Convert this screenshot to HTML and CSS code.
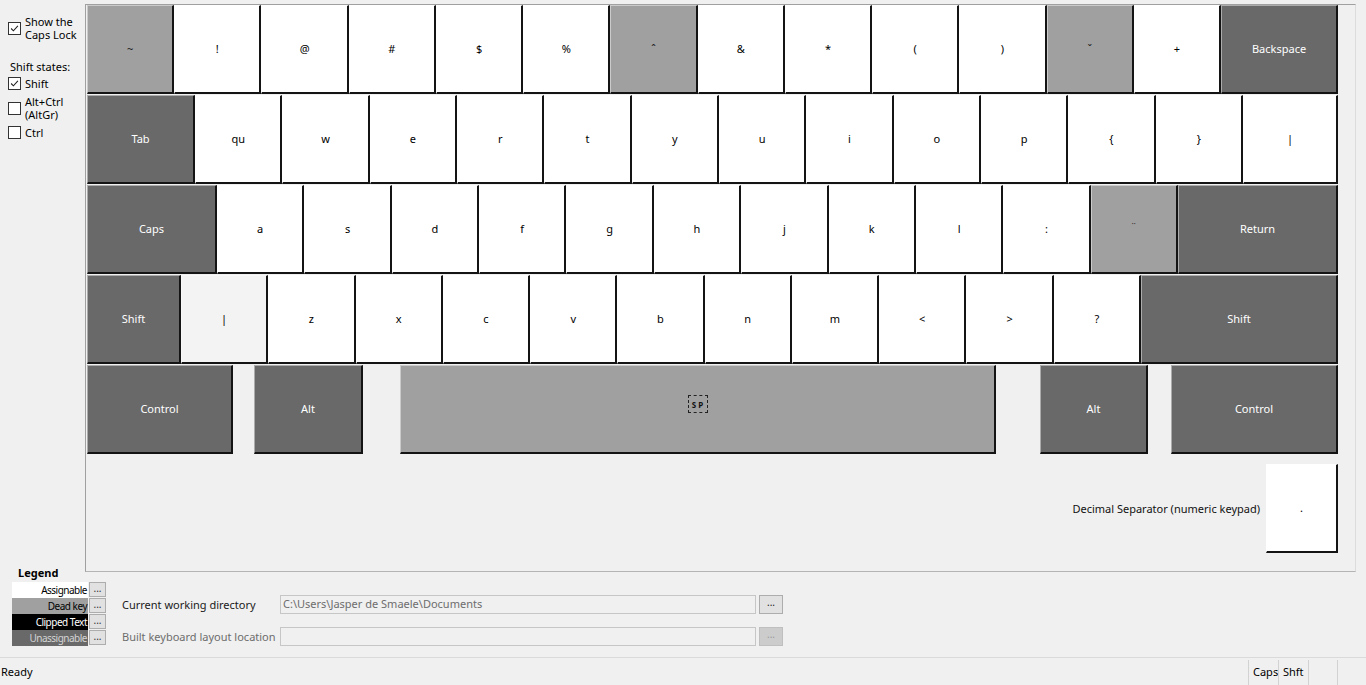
FILE: index.html
```html
<!DOCTYPE html>
<html>
<head>
<meta charset="utf-8">
<title>Keyboard Layout</title>
<link rel="stylesheet" href="styles.css">
</head>
<body>
<div class="app">
  <div class="main">
    <aside class="side">
      <label class="chk two"><span class="box"><svg viewBox="0 0 13 13"><polyline points="2.5,6.5 5.2,9.2 10.5,3.5"/></svg></span><span>Show the<br>Caps Lock</span></label>
      <div class="group-title">Shift states:</div>
      <label class="chk"><span class="box"><svg viewBox="0 0 13 13"><polyline points="2.5,6.5 5.2,9.2 10.5,3.5"/></svg></span><span>Shift</span></label>
      <label class="chk two"><span class="box"></span><span>Alt+Ctrl<br>(AltGr)</span></label>
      <label class="chk"><span class="box"></span><span>Ctrl</span></label>
      <div class="legend-title">Legend</div>
    </aside>
    <section class="panel">
      <div class="kb">
        <div class="row">
          <div class="key dead">~</div>
          <div class="key">!</div>
          <div class="key">@</div>
          <div class="key">#</div>
          <div class="key">$</div>
          <div class="key">%</div>
          <div class="key dead">ˆ</div>
          <div class="key">&amp;</div>
          <div class="key">*</div>
          <div class="key">(</div>
          <div class="key">)</div>
          <div class="key dead">ˇ</div>
          <div class="key">+</div>
          <div class="key fixed dark w-bs">Backspace</div>
        </div>
        <div class="row">
          <div class="key fixed dark w-tab">Tab</div>
          <div class="key">qu</div>
          <div class="key">w</div>
          <div class="key">e</div>
          <div class="key">r</div>
          <div class="key">t</div>
          <div class="key">y</div>
          <div class="key">u</div>
          <div class="key">i</div>
          <div class="key">o</div>
          <div class="key">p</div>
          <div class="key">{</div>
          <div class="key">}</div>
          <div class="key fixed w-pipe">|</div>
        </div>
        <div class="row">
          <div class="key fixed dark w-caps">Caps</div>
          <div class="key">a</div>
          <div class="key">s</div>
          <div class="key">d</div>
          <div class="key">f</div>
          <div class="key">g</div>
          <div class="key">h</div>
          <div class="key">j</div>
          <div class="key">k</div>
          <div class="key">l</div>
          <div class="key">:</div>
          <div class="key dead small">¨</div>
          <div class="key fixed dark w-ret">Return</div>
        </div>
        <div class="row">
          <div class="key fixed dark w-lshift">Shift</div>
          <div class="key hover">|</div>
          <div class="key">z</div>
          <div class="key">x</div>
          <div class="key">c</div>
          <div class="key">v</div>
          <div class="key">b</div>
          <div class="key">n</div>
          <div class="key">m</div>
          <div class="key">&lt;</div>
          <div class="key">&gt;</div>
          <div class="key">?</div>
          <div class="key fixed dark w-rshift">Shift</div>
        </div>
        <div class="row bottom-row">
          <div class="key fixed dark w-lctrl">Control</div>
          <div class="key fixed dark w-lalt">Alt</div>
          <div class="key fixed dead w-space"><span class="sp">SP</span></div>
          <div class="key fixed dark w-ralt">Alt</div>
          <div class="key fixed dark w-rctrl">Control</div>
        </div>
        <div class="decimal">
          <span class="dec-label">Decimal Separator (numeric keypad)</span>
          <div class="key fixed w-dec">.</div>
        </div>
      </div>
    </section>
  </div>
  <div class="lower">
    <div class="legend">
      <div class="lg-row"><span class="sw sw-assign">Assignable</span><span class="dots">...</span></div>
      <div class="lg-row"><span class="sw sw-dead">Dead key</span><span class="dots">...</span></div>
      <div class="lg-row"><span class="sw sw-clip">Clipped Text</span><span class="dots">...</span></div>
      <div class="lg-row"><span class="sw sw-un">Unassignable</span><span class="dots">...</span></div>
    </div>
    <div class="fields">
      <div class="field">
        <span class="flabel">Current working directory</span>
        <div class="input">C:\Users\Jasper de Smaele\Documents</div>
        <span class="btn">...</span>
      </div>
      <div class="field disabled">
        <span class="flabel">Built keyboard layout location</span>
        <div class="input"></div>
        <span class="btn">...</span>
      </div>
    </div>
  </div>
  <footer class="status">
    <span class="ready">Ready</span>
    <span class="cell c-caps">Caps</span>
    <span class="cell c-shft">Shft</span>
    <span class="cell c-e1"></span>
    <span class="cell c-e2"></span>
  </footer>
</div>
</body>
</html>
```
FILE: styles.css
```css
* { box-sizing: border-box; }
html, body { margin: 0; padding: 0; }
body {
  background: #f0f0f0;
  font-family: "Segoe UI", "Noto Sans", "DejaVu Sans", sans-serif;
  font-size: 11px;
  color: #000;
  width: 1366px;
  height: 685px;
  overflow: hidden;
}
.app { display: flex; flex-direction: column; height: 685px; }
.main { display: flex; height: 580px; }

/* sidebar */
.side {
  width: 85px;
  flex: none;
  display: flex;
  flex-direction: column;
  padding: 15px 0 0 8px;
  white-space: nowrap;
}
.chk { display: flex; align-items: center; gap: 4px; line-height: 13px; height: 13px; }
.chk.two { height: 26px; }
.chk + .chk { margin-top: 5px; }
.chk.two + .chk { margin-top: 5px; }
.box {
  width: 13px; height: 13px; flex: none;
  border: 1px solid #333;
  background: #fff;
  display: flex;
}
.box svg { width: 11px; height: 11px; }
.box polyline { fill: none; stroke: #222; stroke-width: 1.3; }
.group-title { margin: 19px 0 3px 2px; line-height: 14px; }
.legend-title {
  margin-top: auto;
  margin-left: 10px;
  font-weight: bold;
  line-height: 14px;
}

/* keyboard panel */
.panel {
  margin-top: 4px;
  width: 1271px;
  height: 568px;
  border-top: 1px solid #a0a0a0;
  border-left: 1px solid #a0a0a0;
  border-bottom: 1px solid #b4b4b4;
  border-right: 1px solid #dcdcdc;
  padding-left: 1px;
}
.kb { width: 1251px; display: flex; flex-direction: column; gap: 1px; }
.row { display: flex; height: 89px; }
.key {
  flex: 1 1 0;
  min-width: 0;
  height: 89px;
  background: #fff;
  border-left: 1px solid rgba(255,255,255,0.45);
  border-top: 1px solid rgba(255,255,255,0.45);
  border-right: 2px solid #141414;
  border-bottom: 2px solid #141414;
  display: flex;
  align-items: center;
  justify-content: center;
  padding-bottom: 2px;
  font-size: 11px;
  color: #000;
}
.key.fixed { flex: none; }
.key.dead { background: #a0a0a0; color: #222; }
.key.dark { background: #696969; color: #fff; }
.key.hover { background: #f3f3f3; }
.key.small { font-size: 11px; padding-bottom: 6px; }

.w-bs { width: 117px; }
.w-tab { width: 108px; }
.w-pipe { width: 95px; }
.w-caps { width: 130px; }
.w-ret { width: 160px; }
.w-lshift { width: 94px; }
.w-rshift { width: 197px; }
.w-lctrl { width: 146px; }
.w-lalt { width: 109px; }
.w-space { width: 596px; }
.w-ralt { width: 108px; }
.w-rctrl { width: 167px; }
.w-dec { width: 72px; }

.bottom-row { gap: 0; }
.w-lalt { margin-left: 21px; }
.w-space { margin-left: 37px; }
.w-ralt { margin-left: 44px; }
.w-rctrl { margin-left: 23px; }

.sp {
  border: 1px dashed #222;
  width: 20px;
  height: 18px;
  display: flex;
  align-items: center;
  justify-content: center;
  font-size: 8px;
  font-weight: bold;
  letter-spacing: 2px;
  padding-left: 2px;
  margin-bottom: 8px;
  color: #111;
}

.decimal {
  margin-top: 9px;
  display: flex;
  justify-content: flex-end;
  align-items: center;
  gap: 6px;
}
.dec-label { color: #111; }

/* lower area */
.lower { display: flex; height: 77px; white-space: nowrap; }
.legend {
  margin-left: 12px;
  padding-top: 2px;
  display: flex;
  flex-direction: column;
}
.lg-row { display: flex; height: 16px; }
.sw {
  width: 76px;
  height: 16px;
  text-align: right;
  font-size: 10px;
  line-height: 16px;
  letter-spacing: -0.5px;
  padding-right: 1px;
}
.sw-assign { background: #fff; color: #000; }
.sw-dead { background: #a0a0a0; color: #000; }
.sw-clip { background: #000; color: #fff; }
.sw-un { background: #696969; color: #d4d4d4; }
.dots {
  width: 17px;
  height: 15px;
  margin-left: 1px;
  background: #e1e1e1;
  border: 1px solid #adadad;
  font-size: 10px;
  line-height: 10px;
  text-align: center;
  color: #333;
}

.fields {
  margin-left: 16px;
  padding-top: 15px;
  display: flex;
  flex-direction: column;
  gap: 13px;
}
.field { display: flex; align-items: center; height: 19px; }
.flabel { width: 158px; flex: none; color: #1a1a1a; padding-bottom: 1px; }
.input {
  width: 476px;
  height: 19px;
  border: 1px solid #c6c6c6;
  background: #f0f0f0;
  color: #6d6d6d;
  font-size: 11px;
  line-height: 16px;
  padding-left: 2px;
}
.btn {
  width: 24px;
  height: 19px;
  margin-left: 3px;
  background: #e1e1e1;
  border: 1px solid #adadad;
  font-size: 10px;
  line-height: 13px;
  text-align: center;
  color: #222;
}
.field.disabled .flabel { color: #6d6d6d; }
.field.disabled .btn { background: #cccccc; border-color: #bfbfbf; color: #9a9a9a; }

/* status bar */
.status {
  height: 28px;
  border-top: 1px solid #dadada;
  display: flex;
  align-items: stretch;
  padding-top: 2px;
}
.ready { flex: 1; padding-left: 1px; line-height: 23px; }
.cell {
  border-left: 1px solid #d2d2d2;
  line-height: 23px;
  padding-left: 4px;
}
.c-caps { width: 30px; }
.c-shft { width: 30px; }
.c-e1 { width: 29px; }
.c-e2 { width: 29px; }
```
